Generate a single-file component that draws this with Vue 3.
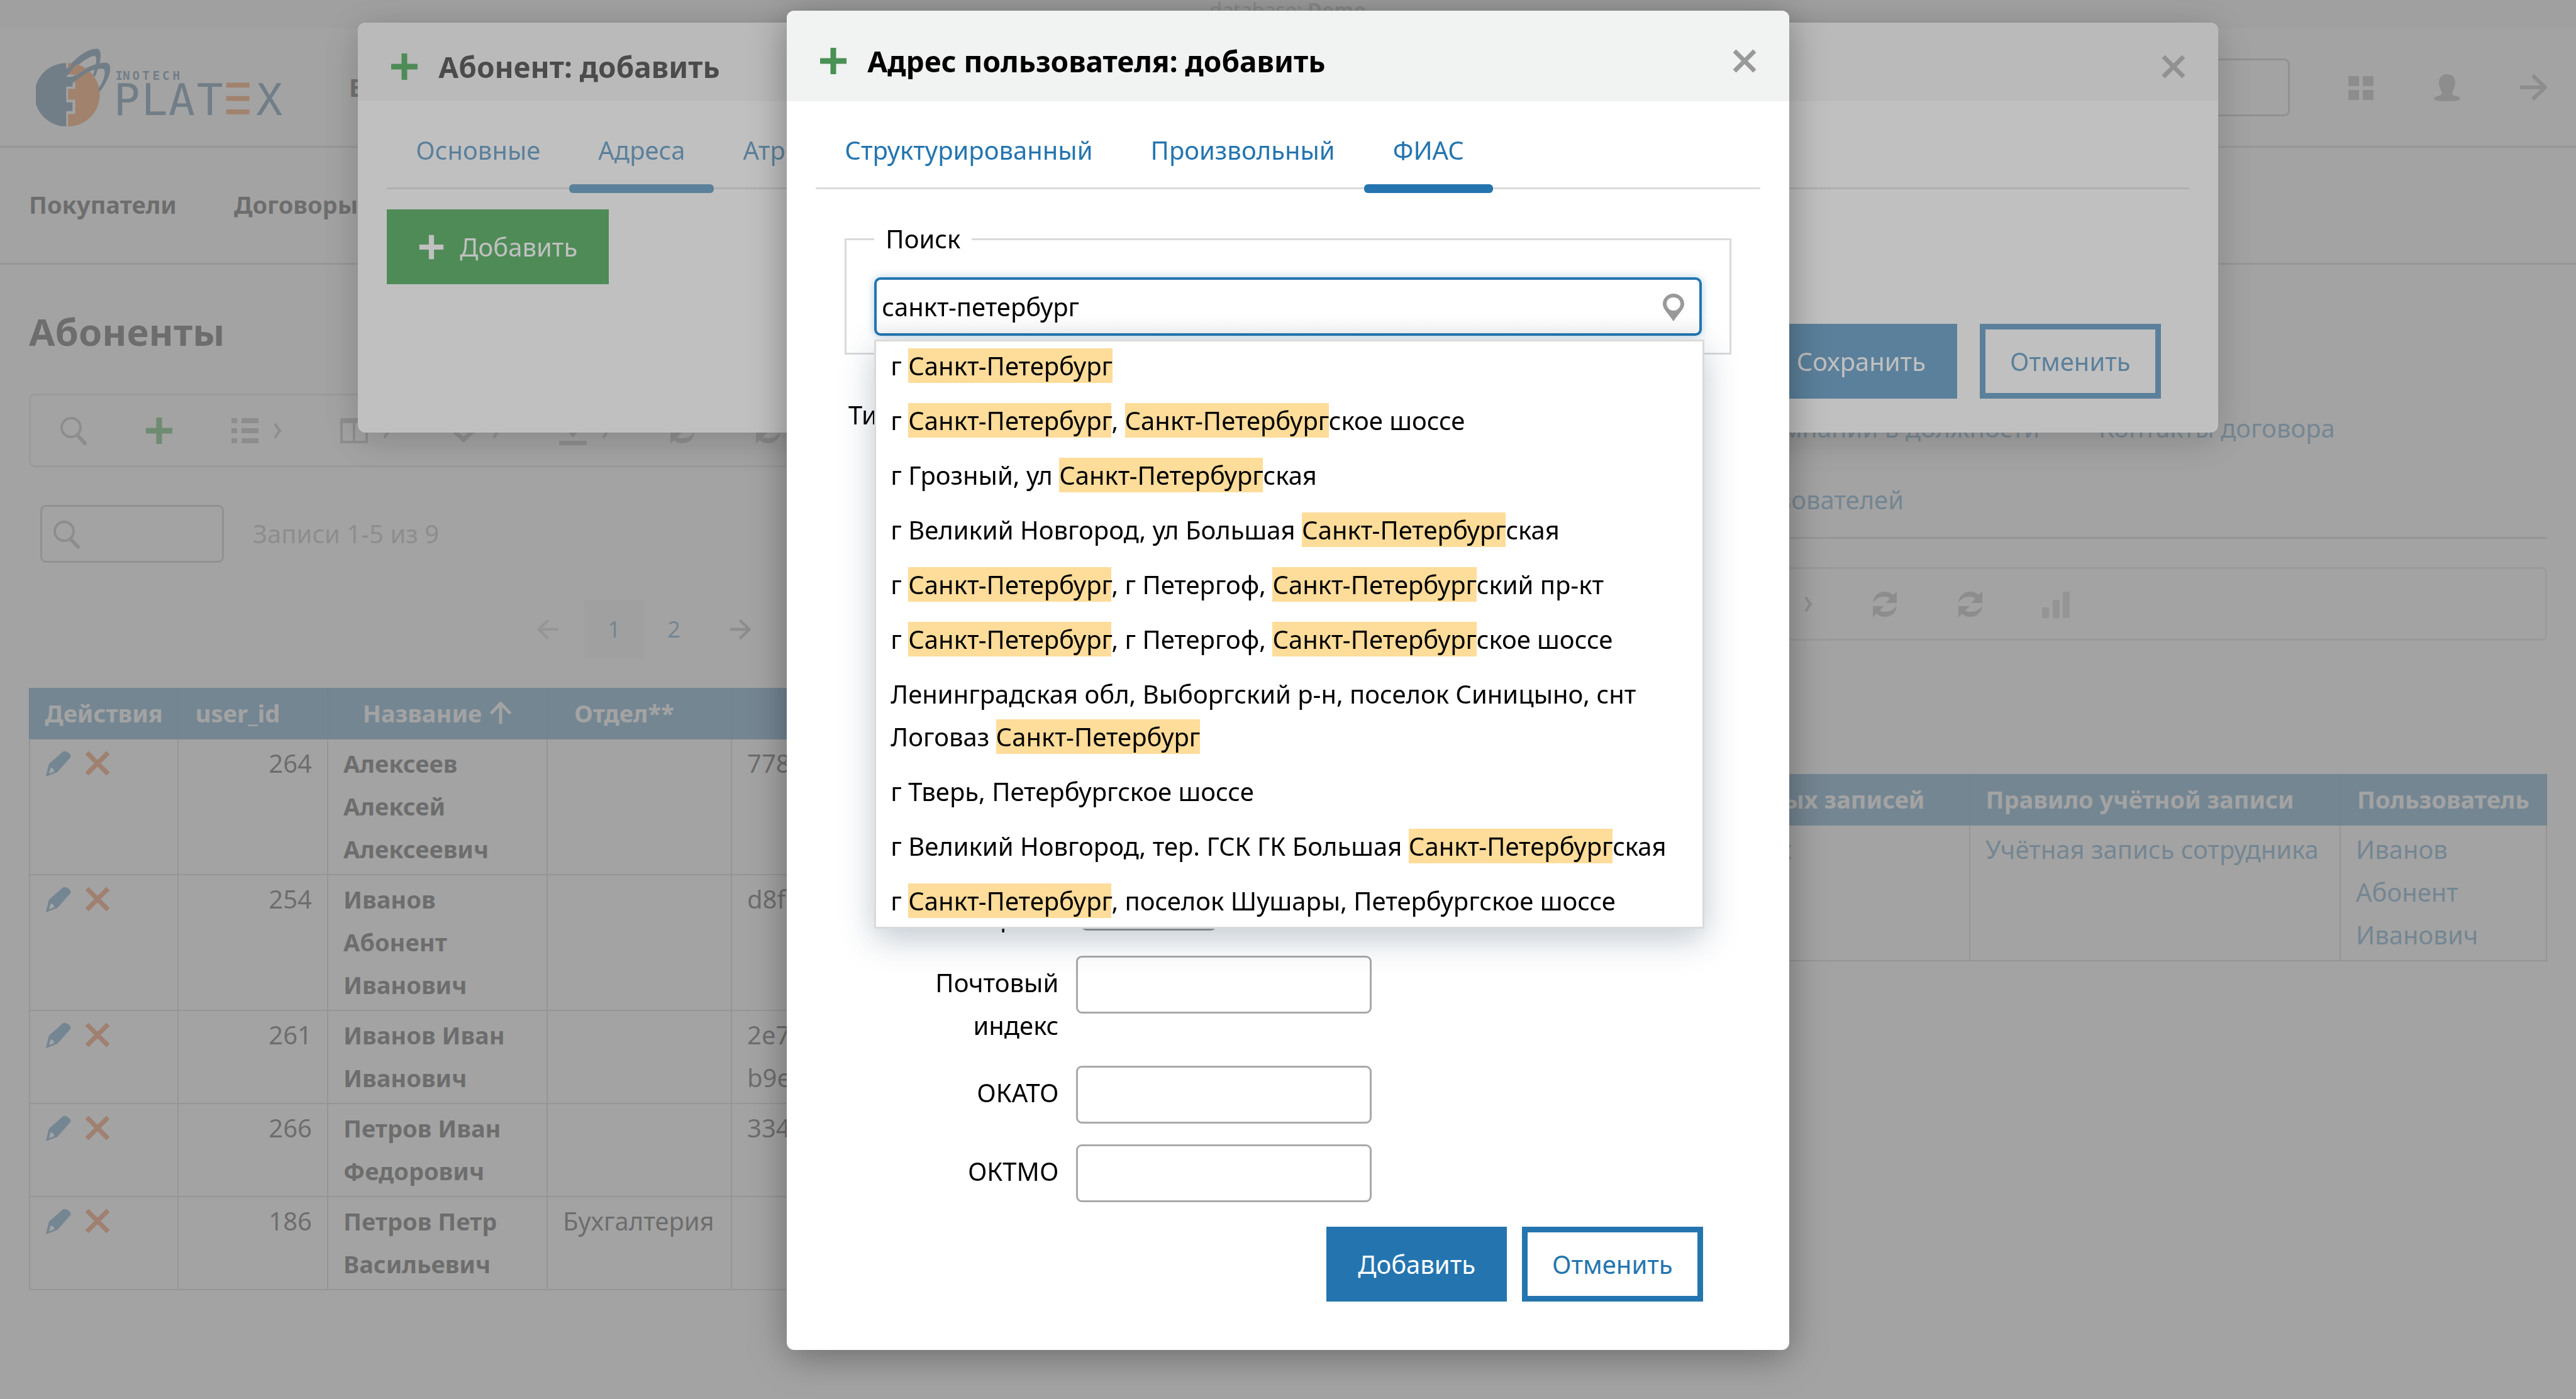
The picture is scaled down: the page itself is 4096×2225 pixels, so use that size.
<script setup>
import { ref } from 'vue'

const query = ref('санкт-петербург')

const suggestions = [
  'г Санкт-Петербург',
  'г Санкт-Петербург, Санкт-Петербургское шоссе',
  'г Грозный, ул Санкт-Петербургская',
  'г Великий Новгород, ул Большая Санкт-Петербургская',
  'г Санкт-Петербург, г Петергоф, Санкт-Петербургский пр-кт',
  'г Санкт-Петербург, г Петергоф, Санкт-Петербургское шоссе',
  'Ленинградская обл, Выборгский р-н, поселок Синицыно, снт Логоваз Санкт-Петербург',
  'г Тверь, Петербургское шоссе',
  'г Великий Новгород, тер. ГСК ГК Большая Санкт-Петербургская',
  'г Санкт-Петербург, поселок Шушары, Петербургское шоссе',
]
const match = 'Санкт-Петербург'
const parts = (text) => text.split(/(Санкт-Петербург)/).filter(Boolean)

const users = [
  { id: 264, name: 'Алексеев Алексей Алексеевич', dept: '', key: ['778'] },
  { id: 254, name: 'Иванов Абонент Иванович', dept: '', key: ['d8f'] },
  { id: 261, name: 'Иванов Иван Иванович', dept: '', key: ['2e7', 'b9e'] },
  { id: 266, name: 'Петров Иван Федорович', dept: '', key: ['334'] },
  { id: 186, name: 'Петров Петр Васильевич', dept: 'Бухгалтерия', key: [] },
]

const leftTools = [
  { icon: 'search' },
  { icon: 'plus', green: true },
  { icon: 'list', menu: true },
  { icon: 'columns', menu: true },
  { icon: 'layers', menu: true },
  { icon: 'download', menu: true },
  { icon: 'refresh' },
  { icon: 'refresh' },
]
const rightTools = [...leftTools.slice(1), { icon: 'chart', pale: true }]

const fields = [
  { id: 'zip', label: 'Почтовый индекс' },
  { id: 'okato', label: 'ОКАТО' },
  { id: 'oktmo', label: 'ОКТМО' },
]
</script>

<template>
  <svg class="sprite" aria-hidden="true">
    <symbol id="i-search" viewBox="0 0 46 46">
      <circle cx="19" cy="18" r="15" fill="none" stroke="currentColor" stroke-width="4" />
      <path d="M29 30L41 43" stroke="currentColor" stroke-width="6" stroke-linecap="round" />
    </symbol>
    <symbol id="i-plus" viewBox="0 0 46 46">
      <path d="M18.500 2h9v16.500H44v9H27.500V44h-9V27.500H2v-9h16.500z" fill="currentColor" />
    </symbol>
    <symbol id="i-list" viewBox="0 0 46 46">
      <path d="M2 3h9v8H2zM18 3h27v8H18zM2 19h9v8H2zM18 19h27v8H18zM2 35h9v8H2zM18 35h27v8H18z" fill="currentColor" />
    </symbol>
    <symbol id="i-columns" viewBox="0 0 46 46">
      <path d="M1 3h44v40H1zM5 11v28h16V11zM25 11v28h16V11z" fill="currentColor" fill-rule="evenodd" />
    </symbol>
    <symbol id="i-layers" viewBox="0 0 46 46">
      <path d="M23 3L45 22 23 42 1 22zM23 12L12 22l11 10 11-10zM23 17l6 5-6 5-6-5z" fill="currentColor" fill-rule="evenodd" />
    </symbol>
    <symbol id="i-download" viewBox="0 0 46 46">
      <path d="M19 0h8v18h10L23 34 9 18h10zM1 39h44v7H1z" fill="currentColor" />
    </symbol>
    <symbol id="i-refresh" viewBox="0 0 46 46">
      <path d="M4 21C5 9 13 3 23 3c6 0 10 2 13 5l6-5v18H24l7-7c-3-2-5-3-9-3C13 11 8 15 4 21zM42 25c-1 12-9 18-19 18-6 0-10-2-13-5l-6 6V26h18l-7 7c3 2 5 2 8 2 9 0 15-4 19-10z" fill="currentColor" />
    </symbol>
    <symbol id="i-chart" viewBox="0 0 46 46">
      <path d="M1 28h11v17H1zM18 16h11v29H18zM34 3h11v42H34z" fill="currentColor" />
    </symbol>
    <symbol id="i-chevron" viewBox="0 0 16 28">
      <path d="M4 4c2 4 4 7 7 10-3 3-5 6-7 10" fill="none" stroke="currentColor" stroke-width="4" stroke-linecap="round" />
    </symbol>
    <symbol id="i-grid" viewBox="0 0 44 44">
      <path d="M2 4h17v16H2zM25 4h17v16H25zM2 26h17v16H2zM25 26h17v16H25z" fill="currentColor" />
    </symbol>
    <symbol id="i-person" viewBox="0 0 44 44">
      <path d="M22 1c8 0 13 5 13 14 0 7-4 11-5 17 0 4 12 3 13 8 0 4-12 4-21 4S1 44 1 40c1-5 13-4 13-8C13 26 9 22 9 15 9 6 14 1 22 1z" fill="currentColor" />
    </symbol>
    <symbol id="i-arrow" viewBox="0 0 44 44">
      <path d="M1 22h38M21 3l20 19-20 19" fill="none" stroke="currentColor" stroke-width="6" />
    </symbol>
    <symbol id="i-close" viewBox="0 0 40 40">
      <path d="M4 4l32 32M36 4L4 36" fill="none" stroke="currentColor" stroke-width="7" />
    </symbol>
    <symbol id="i-pencil" viewBox="0 0 44 44">
      <path d="M29 3c4-4 16 4 13 9L20 37 1 44l5-21zM9 29l-3 10 9-3c0-4-2-6-6-7z" fill="currentColor" fill-rule="evenodd" />
    </symbol>
    <symbol id="i-pin" viewBox="0 0 34 44">
      <path d="M17 0c9 0 17 7 17 16 0 8-5 11-17 28C5 27 0 24 0 16 0 7 8 0 17 0zM17 6C11 6 6 10 6 16s5 11 11 11 11-5 11-11S23 6 17 6z" fill="currentColor" fill-rule="evenodd" />
    </symbol>
  </svg>

  <div class="page">
    <div class="db">database: <b>Demo</b></div>

    <header class="top">
      <svg class="logo" viewBox="20 20 560 190" role="img" aria-label="Inotech Platex">
        <g fill="#14517a">
          <path d="M88 61v31h14v22H88v35h14v20H88v34A71 71 0 0 1 88 61z" />
          <path d="M51 133C80 72 125 29 158 29c10 2 8 24 1 49 0-16-2-32-8-33C128 48 85 90 51 133z" />
          <path d="M46 147C80 100 145 56 180 61c12 5 5 33-16 53 10-20 14-36 6-40C140 70 80 110 46 147z" />
        </g>
        <path d="M92 61A71 71 0 0 1 92 203v-28h16v-32H92v-24h16V87H92z" fill="#f26400" />
        <g fill="none" stroke="#14517a" stroke-linecap="round">
          <path d="M88 86C110 55 135 32 156 34" stroke-width="8" />
          <path d="M94 108C125 80 155 64 178 66" stroke-width="8" />
          <path d="M156 38C160 52 157 72 151 88" stroke-width="6" />
          <path d="M182 68C185 84 175 102 163 120" stroke-width="7" />
        </g>
        <g fill="#14517a">
          <text class="logo-small" y="99" x="198 214 236 258 281 303 326">INOTECH</text>
          <text class="logo-big" y="177" x="194 256 317 380 513">PLATX</text>
        </g>
        <path d="M446 105h52v11h-52zM446 135h52v11h-52zM446 165h52v11h-52z" fill="#f26400" />
      </svg>
      <a class="top-link" href="#">Выход</a>
      <input class="field top-search" type="text" aria-label="Поиск" />
      <div class="top-icons">
        <button aria-label="Приложения"><svg><use href="#i-grid" /></svg></button>
        <button aria-label="Профиль"><svg><use href="#i-person" /></svg></button>
        <button aria-label="Выйти"><svg><use href="#i-arrow" /></svg></button>
      </div>
    </header>

    <nav class="menu">
      <a href="#">Покупатели</a>
      <a href="#">Договоры</a>
    </nav>

    <main class="main">
      <h1>Абоненты</h1>
      <div class="columns">
        <section>
          <div class="toolbar">
            <button v-for="(tool, i) in leftTools" :key="i" :class="{ green: tool.green }" :aria-label="tool.icon">
              <svg class="icon"><use :href="'#i-' + tool.icon" /></svg>
              <svg v-if="tool.menu" class="chev"><use href="#i-chevron" /></svg>
            </button>
          </div>
          <div class="filter">
            <label class="filter-box">
              <svg class="icon"><use href="#i-search" /></svg>
              <input class="field" type="text" aria-label="Фильтр" />
            </label>
            <span>Записи 1-5 из 9</span>
          </div>
          <div class="pager">
            <button class="dim" aria-label="Назад"><svg class="flip"><use href="#i-arrow" /></svg></button>
            <a class="current" href="#">1</a>
            <a href="#">2</a>
            <button aria-label="Вперёд"><svg><use href="#i-arrow" /></svg></button>
          </div>
          <table>
            <colgroup>
              <col class="c-actions" /><col class="c-id" /><col class="c-name" /><col class="c-dept" /><col />
            </colgroup>
            <thead>
              <tr>
                <th>Действия</th>
                <th><span class="sort">user_id</span></th>
                <th><span class="sort">Название<svg><use href="#i-arrow" /></svg></span></th>
                <th><span class="sort">Отдел**</span></th>
                <th></th>
              </tr>
            </thead>
            <tbody>
              <tr v-for="user in users" :key="user.id">
                <td>
                  <div class="actions">
                    <button class="edit" aria-label="Изменить"><svg><use href="#i-pencil" /></svg></button>
                    <button class="remove" aria-label="Удалить"><svg><use href="#i-close" /></svg></button>
                  </div>
                </td>
                <td class="num">{{ user.id }}</td>
                <td><b>{{ user.name }}</b></td>
                <td>{{ user.dept }}</td>
                <td><div v-for="line in user.key" :key="line">{{ line }}</div></td>
              </tr>
            </tbody>
          </table>
        </section>

        <section>
          <div class="subtabs">
            <a class="lead" href="#">Компании в должности</a>
            <a href="#">Контакты договора</a>
          </div>
          <div class="subtabs last">
            <a class="lead-two" href="#">Правила пользователей</a>
          </div>
          <div class="toolbar">
            <button v-for="(tool, i) in rightTools" :key="i" :class="{ green: tool.green, pale: tool.pale }" :aria-label="tool.icon">
              <svg class="icon"><use :href="'#i-' + tool.icon" /></svg>
              <svg v-if="tool.menu" class="chev"><use href="#i-chevron" /></svg>
            </button>
          </div>
          <div class="filter">
            <label class="filter-box">
              <svg class="icon"><use href="#i-search" /></svg>
              <input class="field" type="text" aria-label="Фильтр" />
            </label>
          </div>
          <table class="rules">
            <colgroup>
              <col /><col class="c-type" /><col class="c-rule" /><col class="c-user" />
            </colgroup>
            <thead>
              <tr>
                <th></th>
                <th><span class="sort">Тип учётных записей</span></th>
                <th><span class="sort">Правило учётной записи</span></th>
                <th>Пользователь</th>
              </tr>
            </thead>
            <tbody>
              <tr>
                <td></td>
                <td><a href="#">Сотрудник</a></td>
                <td><a href="#">Учётная запись сотрудника</a></td>
                <td><a href="#">Иванов Абонент Иванович</a></td>
              </tr>
            </tbody>
          </table>
        </section>
      </div>
    </main>
  </div>

  <div class="overlay">
    <section class="dialog subscriber" role="dialog" aria-label="Абонент: добавить">
      <header class="dialog-head">
        <svg class="mark"><use href="#i-plus" /></svg>
        <h2>Абонент: добавить</h2>
        <button class="close" aria-label="Закрыть"><svg><use href="#i-close" /></svg></button>
      </header>
      <div class="dialog-body">
        <nav class="tabs">
          <a href="#">Основные</a>
          <a class="active" href="#">Адреса</a>
          <a href="#">Атрибуты</a>
        </nav>
        <button class="btn add"><svg><use href="#i-plus" /></svg>Добавить</button>
        <footer class="buttons">
          <button class="btn primary">Сохранить</button>
          <button class="btn outline">Отменить</button>
        </footer>
      </div>
    </section>
  </div>

  <div class="overlay">
    <section class="dialog address" role="dialog" aria-label="Адрес пользователя: добавить">
      <header class="dialog-head">
        <svg class="mark"><use href="#i-plus" /></svg>
        <h2>Адрес пользователя: добавить</h2>
        <button class="close" aria-label="Закрыть"><svg><use href="#i-close" /></svg></button>
      </header>
      <div class="dialog-body">
        <nav class="tabs">
          <a href="#">Структурированный</a>
          <a href="#">Произвольный</a>
          <a class="active" href="#">ФИАС</a>
        </nav>
        <form class="form" @submit.prevent>
          <fieldset>
            <legend>Поиск</legend>
            <div class="combo">
              <input v-model="query" type="text" aria-label="Поиск адреса" />
              <svg class="pin"><use href="#i-pin" /></svg>
              <ul class="options">
                <li v-for="item in suggestions" :key="item"><template v-for="(part, i) in parts(item)" :key="i"><mark v-if="part === match">{{ part }}</mark><template v-else>{{ part }}</template></template></li>
              </ul>
            </div>
          </fieldset>
          <div class="row kind">
            <label for="kind">Тип пользования</label>
            <select id="kind"></select>
          </div>
          <div class="row country">
            <label for="country">Страна</label>
            <select id="country"></select>
          </div>
          <div v-for="f in fields" :key="f.id" class="row">
            <label :for="f.id">{{ f.label }}</label>
            <input :id="f.id" class="field" type="text" />
          </div>
          <footer class="buttons">
            <button class="btn primary" type="submit">Добавить</button>
            <button class="btn outline" type="button">Отменить</button>
          </footer>
        </form>
      </div>
    </section>
  </div>
</template>

<style>
body {
  margin: 0;
  overflow: hidden;
  background: #fff;
}
</style>

<style scoped>
* {
  box-sizing: border-box;
}
.page,
.overlay {
  --blue: #2475af;
  font-family: "Noto Sans", sans-serif;
  font-size: 40px;
  line-height: 68px;
  color: #000;
}
.sprite {
  display: none;
}
svg {
  display: block;
  flex: none;
}
a {
  color: var(--blue);
  text-decoration: none;
}
button {
  display: flex;
  align-items: center;
  padding: 0;
  border: 0;
  background: none;
  font: inherit;
  color: #999;
}
.field {
  height: 92px;
  border: 3px solid #a9a9a9;
  border-radius: 9px;
  background: #fff;
  font: inherit;
}

/* Page header */
.page {
  min-height: 100vh;
}
.db {
  height: 45px;
  background: #eee;
  font-size: 32px;
  line-height: 32px;
  text-align: center;
  color: #999;
}
.top {
  display: flex;
  align-items: center;
  height: 190px;
  padding: 0 46px 0 57px;
  border-bottom: 3px solid #c3c3c3;
}
.logo {
  width: 398px;
  height: 135px;
}
.logo-small {
  font: bold 27px "DejaVu Sans Mono", monospace;
}
.logo-big {
  font: 98px "DejaVu Sans Mono", monospace;
}
.top-link {
  margin-left: 100px;
  font-weight: bold;
  color: #000;
}
.top-search {
  width: 600px;
  margin-left: auto;
}
.top-icons {
  display: flex;
  gap: 93px;
  margin-left: 91px;
}
.top-icons svg {
  width: 44px;
  height: 44px;
}
.menu {
  display: flex;
  align-items: center;
  gap: 91px;
  height: 186px;
  padding: 0 46px 4px;
  border-bottom: 3px solid #c3c3c3;
  font-size: 38px;
  font-weight: bold;
}
.menu a {
  color: #000;
}

/* Content */
.main {
  padding: 62px 46px;
}
h1 {
  margin: 0 0 55px;
  font-size: 60px;
  line-height: 88px;
}
.columns {
  display: grid;
  grid-template-columns: 1fr 1fr;
  align-items: start;
  gap: 92px;
}
.toolbar {
  display: flex;
  height: 117px;
  border: 3px solid #d5d5d5;
  border-radius: 9px;
}
.toolbar button {
  gap: 22px;
  padding: 0 45px;
}
.toolbar .green {
  color: #0a8c1b;
}
.toolbar .pale {
  color: #bbb;
}
.icon {
  width: 46px;
  height: 46px;
}
.chev {
  width: 16px;
  height: 28px;
}
.filter {
  display: flex;
  align-items: center;
  gap: 46px;
  padding: 60px 18px;
  color: #999;
}
.filter-box {
  position: relative;
}
.filter-box .field {
  display: block;
  width: 292px;
}
.filter-box .icon {
  position: absolute;
  left: 19px;
  top: 24px;
}
.pager {
  display: flex;
  justify-content: center;
  align-items: center;
  margin-bottom: 47px;
  font-size: 36px;
}
.pager a {
  width: 95px;
  line-height: 92px;
  text-align: center;
}
.pager .current {
  background: #eee;
}
.pager svg {
  width: 34px;
  height: 36px;
  margin: 0 41px;
}
.pager .dim {
  color: #c3c3c3;
}
.flip {
  transform: scaleX(-1);
}

table {
  width: 100%;
  table-layout: fixed;
  border-collapse: collapse;
}
.c-actions {
  width: 236px;
}
.c-id {
  width: 238px;
}
.c-name {
  width: 349px;
}
.c-dept {
  width: 293px;
}
.c-type {
  width: 512px;
}
.c-rule {
  width: 589px;
}
.c-user {
  width: 328px;
}
th,
td {
  padding: 4px 24px 6px;
  border: 2px solid #bbb;
  text-align: left;
  vertical-align: top;
}
th {
  padding: 4px 20px 6px;
  border-color: var(--blue) #1c6aa2;
  background: var(--blue);
  font-size: 38px;
  color: #fff;
  text-align: center;
  white-space: nowrap;
}
td b {
  font-size: 38px;
}
.num {
  text-align: right;
}
.sort {
  display: inline-flex;
  align-items: center;
  padding-right: 48px;
}
.sort svg {
  width: 36px;
  height: 36px;
  margin: 0 -48px 0 12px;
  transform: rotate(-90deg);
}
.actions {
  display: flex;
  align-items: center;
  gap: 20px;
  height: 68px;
}
.actions svg {
  width: 42px;
  height: 42px;
}
.edit {
  color: var(--blue);
}
.remove {
  color: #ee5a10;
}
.subtabs {
  display: flex;
  height: 114px;
}
.subtabs a {
  padding: 21px 47px;
  text-align: right;
}
.subtabs.last {
  height: 117px;
  margin-bottom: 45px;
  border-bottom: 3px solid #c3c3c3;
}
.subtabs .lead {
  width: 1196px;
}
.subtabs .lead-two {
  width: 980px;
}

/* Dialogs */
.overlay {
  position: fixed;
  inset: 0;
  background: rgba(138, 138, 138, 0.54);
}
.dialog {
  margin: 0 auto;
  overflow: hidden;
  border-radius: 12px;
  background: #fff;
  box-shadow: 0 10px 60px rgba(0, 0, 0, 0.35);
}
.subscriber {
  width: 72.2%;
  margin-top: 36px;
}
.address {
  width: 38.9%;
  margin-top: 17px;
}
.dialog-head {
  display: flex;
  align-items: center;
  gap: 31px;
  padding: 36px 51px 21px;
  background: #f1f2f2;
}
.address .dialog-head {
  padding: 46px 51px 30px;
}
.mark {
  width: 46px;
  height: 46px;
  color: #0a8c1b;
}
.address .mark {
  color: #4a9156;
}
h2 {
  margin: 0;
  font-size: 46px;
  line-height: 68px;
}
.close {
  margin-left: auto;
}
.close svg {
  width: 40px;
  height: 40px;
}
.dialog-body {
  padding: 0 46px;
}
.tabs {
  display: flex;
  height: 140px;
  border-bottom: 3px solid #dadada;
}
.tabs a {
  position: relative;
  padding: 44px 46px 0;
}
.tabs .active::after {
  content: "";
  position: absolute;
  left: 0;
  right: 0;
  bottom: -9px;
  height: 14px;
  border-radius: 6px;
  background: var(--blue);
}
.btn {
  justify-content: center;
  height: 119px;
  padding: 0 50px;
}
.add {
  gap: 24px;
  margin: 32px 0 63px;
  background: #0a8c1b;
  color: #fff;
}
.add svg {
  width: 42px;
  height: 42px;
}
.primary {
  background: var(--blue);
  color: #fff;
}
.outline {
  padding: 0 39px;
  border: 9px solid var(--blue);
  background: #fff;
  color: var(--blue);
}
.buttons {
  display: flex;
  justify-content: flex-end;
  gap: 36px;
  padding: 0 45px 54px;
}
.address .buttons {
  gap: 24px;
  margin-top: 34px;
  padding-bottom: 77px;
}
.form {
  padding: 45px 46px 0;
}
fieldset {
  margin: 0 0 53px;
  padding: 27px 44px;
  border: 3px solid #dadada;
}
legend {
  padding: 0 18px;
}
.combo {
  position: relative;
}
.combo input {
  display: block;
  width: 100%;
  height: 93px;
  padding: 0 8px;
  border: 4px solid var(--blue);
  border-radius: 10px;
  background: linear-gradient(#fff 70%, #f5f5f5);
  box-shadow: 0 0 14px rgba(36, 117, 175, 0.35);
  font: inherit;
}
.pin {
  position: absolute;
  right: 28px;
  top: 26px;
  width: 34px;
  height: 44px;
  color: #999;
}
.options {
  position: absolute;
  z-index: 1;
  top: 99px;
  left: 0;
  right: -4px;
  margin: 0;
  padding: 0;
  border: 3px solid #dadada;
  background: #fff;
  box-shadow: 0 16px 50px rgba(30, 60, 90, 0.28);
  list-style: none;
}
.options li {
  padding: 5px 23px 14px;
}
.options li:last-child {
  padding-bottom: 7px;
}
mark {
  background: #fedc9a;
  color: inherit;
}
.row {
  display: flex;
  gap: 28px;
  min-height: 97px;
  margin-bottom: 28px;
}
.row label {
  width: 340px;
  padding: 9px 0 2px;
  text-align: right;
}
.row .field {
  width: 470px;
}
.row select {
  height: 58px;
  width: 219px;
  margin: 16px 6px 0;
  border: 3px solid #999;
  border-radius: 12px;
  background: #fff;
}
.kind {
  margin-bottom: 692px;
}
.country {
  min-height: 83px;
  margin-bottom: 26px;
}
.row.country label {
  padding-top: 18px;
}
</style>
